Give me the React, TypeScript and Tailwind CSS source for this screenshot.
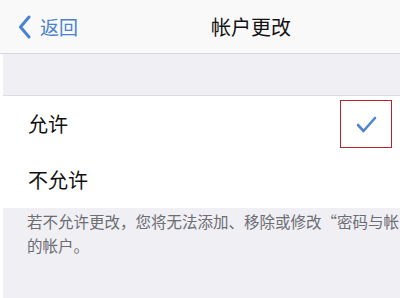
export default function App() {
  const font = { fontFamily: '"Noto Sans CJK SC", "Noto Sans", sans-serif' }
  return (
    <div className="w-[400px] h-[298px] overflow-hidden bg-white pl-[3px]" style={font}>
      {/* Navigation bar */}
      <div className="h-[54px] flex items-center bg-[#f9f9f9] border-b border-[#d8d8dc] -ml-[3px] pl-[18px]">
        <div className="flex items-center text-[#4a82d2]">
          <svg width="13" height="24" viewBox="0 0 13 24" fill="none">
            <path d="M11 2 L2.5 12 L11 22" stroke="#4a82d2" strokeWidth="3" strokeLinecap="round" strokeLinejoin="round" />
          </svg>
          <span className="ml-[9px] text-[19px] leading-none">返回</span>
        </div>
        <span className="ml-[133px] text-[20px] leading-none text-[#111]">帐户更改</span>
      </div>

      {/* Spacer section */}
      <div className="h-[42px] bg-[#efeff4] border-b border-[#dcdce0]" />

      {/* Options */}
      <div className="bg-white">
        <div className="h-[56px] flex items-center justify-between pl-[25px] pr-[8px]">
          <span className="text-[20px] text-[#111]">允许</span>
          <div className="w-[52px] h-[48px] border border-[#b5262b] flex items-center justify-center">
            <svg width="21" height="17" viewBox="0 0 21 17" fill="none">
              <path d="M2 9 L7.5 15 L19 2" stroke="#4f86d4" strokeWidth="2.6" strokeLinecap="round" strokeLinejoin="round" />
            </svg>
          </div>
        </div>
        <div className="h-[56px] flex items-center pl-[25px]">
          <span className="text-[20px] text-[#111]">不允许</span>
        </div>
      </div>

      {/* Footer note */}
      <div className="h-[90px] bg-[#efeff4] pl-[24px] pt-[1px] text-[15.5px] leading-[24px] text-[#6d6d72] whitespace-nowrap overflow-hidden">
        <p>若不允许更改，您将无法添加、移除或修改“密码与帐</p>
        <p>的帐户。</p>
      </div>
    </div>
  )
}
